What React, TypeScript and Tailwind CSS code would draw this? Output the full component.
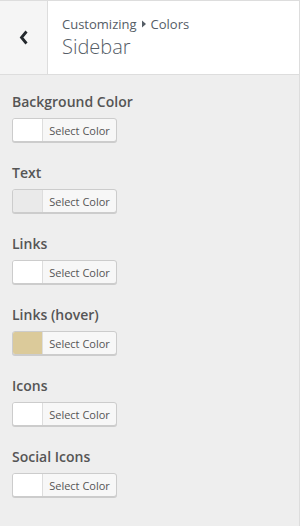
import React from "react";

const items = [
  { label: "Background Color", color: "#ffffff" },
  { label: "Text", color: "#eaeaea" },
  { label: "Links", color: "#ffffff" },
  { label: "Links (hover)", color: "#dbca9a" },
  { label: "Icons", color: "#ffffff" },
  { label: "Social Icons", color: "#ffffff" },
];

export default function App() {
  return (
    <div
      className="w-[300px] h-[526px] bg-[#eeeeee] border-r border-[#dddddd] text-[#555555] overflow-hidden"
      style={{ fontFamily: '"Open Sans", "Noto Sans", sans-serif' }}
    >
      <div className="flex h-[75px] bg-white border-t border-b border-[#dddddd]">
        <div className="w-[48px] bg-[#f5f5f5] border-r border-[#dddddd] flex items-center justify-center">
          <svg width="10" height="15" viewBox="0 0 10 15" className="mt-[-1px]">
            <polyline points="7.5,1.5 2.5,7.5 7.5,13.5" fill="none" stroke="#23282d" strokeWidth="2.8" />
          </svg>
        </div>
        <div className="pl-[14px] pt-[14px] flex flex-col">
          <div className="flex items-center text-[13px] leading-[18px] text-[#555d66]">
            <span>Customizing</span>
            <svg width="8" height="8" viewBox="0 0 8 8" className="mx-[3px]">
              <polygon points="2,0.5 6,4 2,7.5" fill="#555d66" />
            </svg>
            <span>Colors</span>
          </div>
          <div className="text-[20px] leading-[27px] text-[#555d66] font-light">Sidebar</div>
        </div>
      </div>
      <div className="pl-[12px] pt-[17px] flex flex-col gap-[21px]">
        {items.map((it) => (
          <div key={it.label} className="flex flex-col gap-[6px]">
            <div className="text-[14px] leading-[20px] font-semibold text-[#555555]">{it.label}</div>
            <div className="flex w-[105px] h-[24px] border border-[#cccccc] rounded-[3px] bg-[#f7f7f7] shadow-[0_1px_0_#cccccc] overflow-hidden">
              <div className="w-[30px] h-full border-r border-[#dddddd]" style={{ backgroundColor: it.color }} />
              <div className="flex-1 flex items-center justify-center text-[11px] text-[#555555] leading-none">
                Select Color
              </div>
            </div>
          </div>
        ))}
      </div>
    </div>
  );
}
